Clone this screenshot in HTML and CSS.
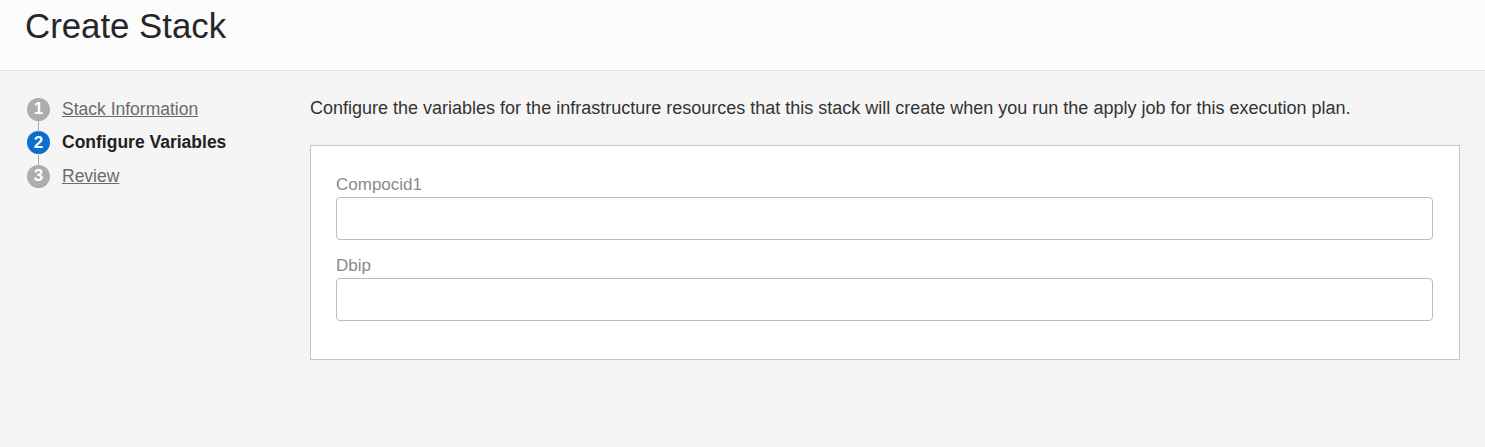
FILE: index.html
```html
<!DOCTYPE html>
<html>
<head>
<meta charset="utf-8">
<link rel="stylesheet" href="styles.css">
</head>
<body>
<header class="header">
  <h1 class="title">Create Stack</h1>
</header>
<main class="main">
  <nav class="steps">
    <div class="step">
      <span class="num">1</span>
      <a class="step-link" href="#">Stack Information</a>
    </div>
    <div class="step">
      <span class="num active">2</span>
      <span class="step-current">Configure Variables</span>
    </div>
    <div class="step">
      <span class="num">3</span>
      <a class="step-link" href="#">Review</a>
    </div>
  </nav>
  <section class="content">
    <p class="desc">Configure the variables for the infrastructure resources that this stack will create when you run the apply job for this execution plan.</p>
    <div class="panel">
      <div class="field">
        <label class="label">Compocid1</label>
        <input class="input" type="text">
      </div>
      <div class="field">
        <label class="label">Dbip</label>
        <input class="input" type="text">
      </div>
    </div>
  </section>
</main>
</body>
</html>
```
FILE: styles.css
```css
* { box-sizing: border-box; }
html, body {
  margin: 0;
  height: 100%;
}
body {
  background: #f5f5f5;
  font-family: "Liberation Sans", Arial, sans-serif;
  color: #333;
}
.header {
  height: 71px;
  background: #fcfcfc;
  border-bottom: 1px solid #e3e3e3;
  padding-left: 25px;
  display: flex;
  align-items: flex-start;
}
.title {
  margin: 0;
  margin-top: 6px;
  font-size: 34.8px;
  font-weight: normal;
  color: #262626;
  line-height: 40px;
}
.main {
  display: flex;
  padding-top: 27px;
}
.steps {
  width: 310px;
  padding-left: 27px;
  display: flex;
  flex-direction: column;
}
.step {
  display: flex;
  align-items: center;
  height: 22px;
  gap: 12px;
  position: relative;
}
.step + .step { margin-top: 11.5px; }
.step + .step::before {
  content: "";
  position: absolute;
  left: 11px;
  top: -12px;
  width: 1px;
  height: 12px;
  background: #a9a9a9;
}
.num {
  width: 23px;
  height: 23px;
  border-radius: 50%;
  background: #adadad;
  color: #fff;
  font-size: 17px;
  font-weight: bold;
  display: flex;
  align-items: center;
  justify-content: center;
  flex-shrink: 0;
}
.num.active { background: #0b6fcf; }
.step-link {
  color: #6b6b6b;
  font-size: 17.5px;
  text-decoration: underline;
}
.step-current {
  color: #222;
  font-size: 17.5px;
  font-weight: bold;
}
.content {
  flex: 1;
  padding-right: 25px;
}
.desc {
  margin: 0;
  font-size: 18px;
  line-height: 21px;
  color: #333;
}
.panel {
  margin-top: 26px;
  background: #fff;
  border: 1px solid #c6c6c6;
  padding: 29px 26px 38px 25px;
  display: flex;
  flex-direction: column;
  gap: 16px;
}
.field {
  display: flex;
  flex-direction: column;
  gap: 2px;
}
.label {
  font-size: 17px;
  line-height: 20px;
  color: #8a8a8a;
}
.input {
  height: 43px;
  border: 1px solid #bcbcbc;
  border-radius: 4px;
  background: #fff;
  font-size: 16px;
  padding: 0 10px;
}
```
